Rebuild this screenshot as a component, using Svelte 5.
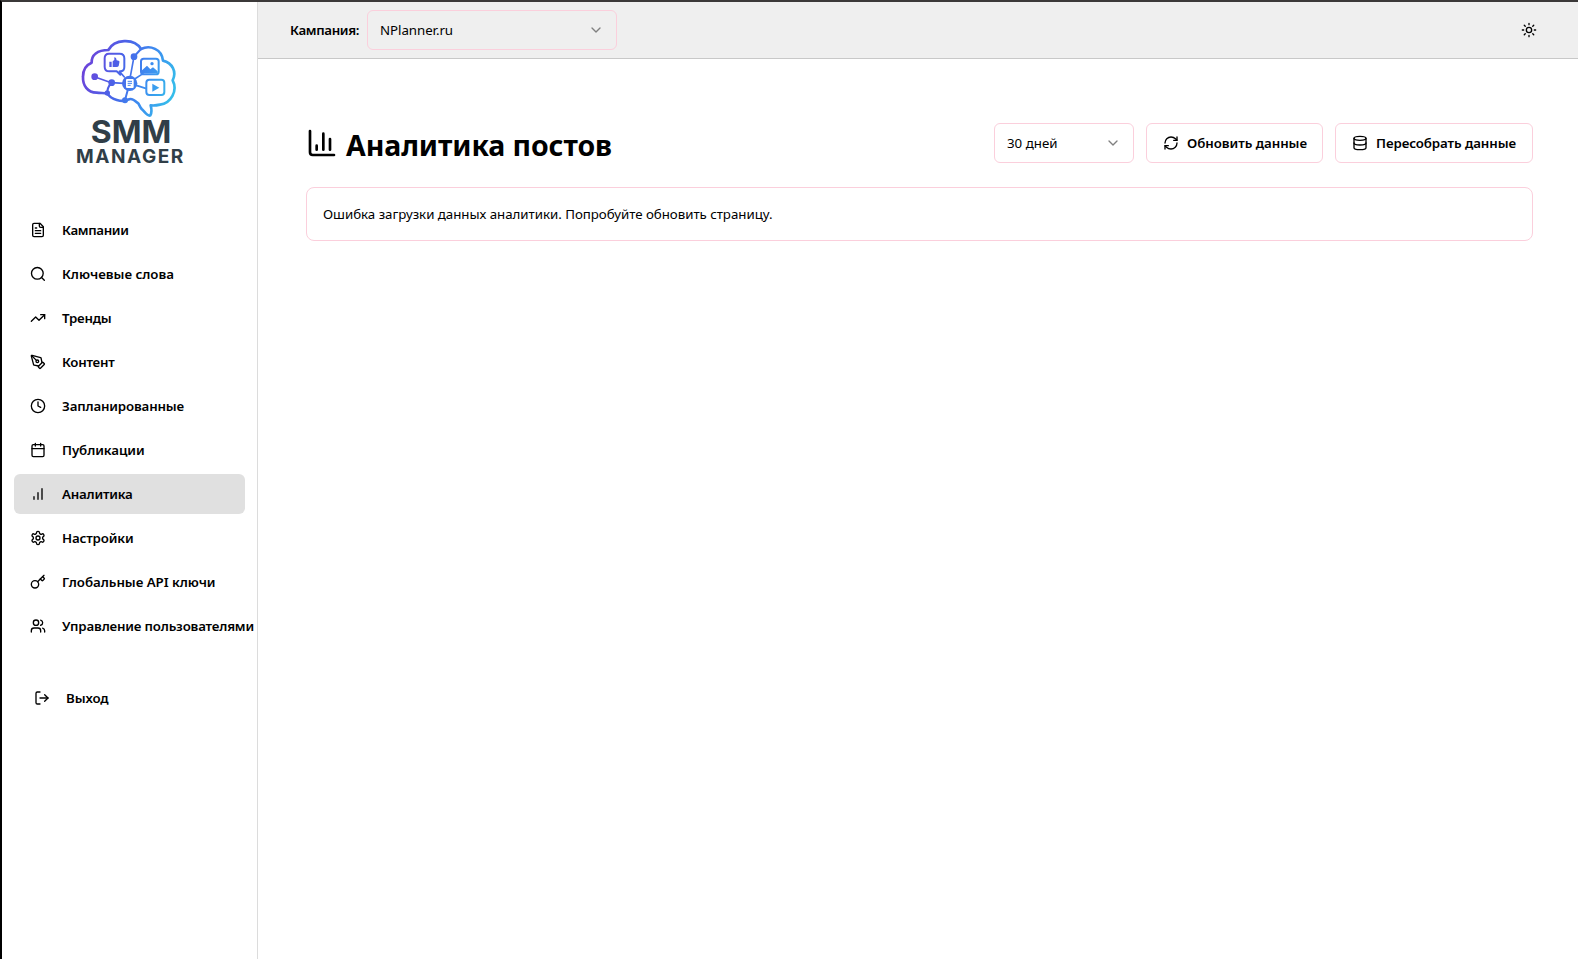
<script>
  const nav = [
    { id: 'file', label: 'Кампании', width: 66.5 },
    { id: 'search', label: 'Ключевые слова', width: 112 },
    { id: 'trend', label: 'Тренды', width: 49.5 },
    { id: 'pen', label: 'Контент', width: 52.5 },
    { id: 'clock', label: 'Запланированные', width: 122 },
    { id: 'calendar', label: 'Публикации', width: 82.5 },
    { id: 'bars', label: 'Аналитика', width: 70.5, active: true },
    { id: 'settings', label: 'Настройки', width: 71.5 },
    { id: 'key', label: 'Глобальные API ключи', width: 153.5 },
    { id: 'users', label: 'Управление пользователями', width: 192 }
  ];

  const icons = {
    file: '<path d="M15 2H6a2 2 0 0 0-2 2v16a2 2 0 0 0 2 2h12a2 2 0 0 0 2-2V7Z"/><path d="M14 2v4a2 2 0 0 0 2 2h4"/><path d="M10 9H8"/><path d="M16 13H8"/><path d="M16 17H8"/>',
    search: '<circle cx="11" cy="11" r="8.8"/><path d="m21.5 21.5-4.2-4.2"/>',
    trend: '<path d="M22 7 13.5 15.5 8.500 10.500 2 17"/><path d="M16 7h6v6"/>',
    pen: '<path d="M15.707 21.293a1 1 0 0 1-1.414 0l-1.586-1.586a1 1 0 0 1 0-1.414l5.586-5.586a1 1 0 0 1 1.414 0l1.586 1.586a1 1 0 0 1 0 1.414z"/><path d="m18 13-1.375-6.874a1 1 0 0 0-.746-.776L3.235 2.028a1 1 0 0 0-1.207 1.207L5.350 15.879a1 1 0 0 0 .776.746L13 18"/><path d="m2.300 2.300 7.286 7.286"/><circle cx="11" cy="11" r="2"/>',
    clock: '<circle cx="12" cy="12" r="10"/><path d="M12 6v6l4 2"/>',
    calendar: '<path d="M8 2v4M16 2v4"/><rect width="18" height="18" x="3" y="4" rx="2"/><path d="M3 10h18"/>',
    bars: '<path d="M12 20V10M18 20V4M6 20v-4"/>',
    settings: '<path d="M12.220 2h-.44a2 2 0 0 0-2 2v.18a2 2 0 0 1-1 1.730l-.43.25a2 2 0 0 1-2 0l-.15-.08a2 2 0 0 0-2.730.73l-.22.38a2 2 0 0 0 .73 2.730l.15.1a2 2 0 0 1 1 1.720v.51a2 2 0 0 1-1 1.740l-.15.09a2 2 0 0 0-.73 2.730l.22.38a2 2 0 0 0 2.730.73l.15-.08a2 2 0 0 1 2 0l.43.25a2 2 0 0 1 1 1.730V20a2 2 0 0 0 2 2h.44a2 2 0 0 0 2-2v-.18a2 2 0 0 1 1-1.730l.43-.25a2 2 0 0 1 2 0l.15.08a2 2 0 0 0 2.730-.73l.22-.39a2 2 0 0 0-.73-2.730l-.15-.08a2 2 0 0 1-1-1.740v-.5a2 2 0 0 1 1-1.740l.15-.09a2 2 0 0 0 .73-2.730l-.22-.38a2 2 0 0 0-2.730-.73l-.15.08a2 2 0 0 1-2 0l-.43-.25a2 2 0 0 1-1-1.730V4a2 2 0 0 0-2-2z"/><circle cx="12" cy="12" r="3"/>',
    key: '<path d="m15.500 7.500 2.300 2.300a1 1 0 0 0 1.400 0l2.100-2.100a1 1 0 0 0 0-1.400L19 4"/><path d="m21 2-9.600 9.600"/><circle cx="7.500" cy="15.500" r="5.500"/>',
    users: '<path d="M16 21v-2a4 4 0 0 0-4-4H6a4 4 0 0 0-4 4v2"/><circle cx="9" cy="7" r="4"/><path d="M22 21v-2a4 4 0 0 0-3-3.870"/><path d="M16 3.130a4 4 0 0 1 0 7.750"/>',
    logout: '<path d="M9 21H5a2 2 0 0 1-2-2V5a2 2 0 0 1 2-2h4"/><path d="m16 17 5-5-5-5"/><path d="M21 12H9"/>',
    chevron: '<path d="m6 9 6 6 6-6"/>',
    sun: '<circle cx="12" cy="12" r="4"/><path d="M12 2v2M12 20v2M4.930 4.930l1.410 1.410M17.660 17.660l1.410 1.410M2 12h2M20 12h2M6.340 17.660l-1.410 1.410M19.070 4.930l-1.410 1.410"/>',
    chart: '<path d="M3 3v16a2 2 0 0 0 2 2h16"/><path d="M18 17V9M13 17V5M8 17v-3"/>',
    refresh: '<path d="M3 12a9 9 0 0 1 9-9 9.750 9.750 0 0 1 6.740 2.740L21 8"/><path d="M21 3v5h-5"/><path d="M21 12a9 9 0 0 1-9 9 9.750 9.750 0 0 1-6.740-2.740L3 16"/><path d="M8 16H3v5"/>',
    database: '<ellipse cx="12" cy="5" rx="9" ry="3"/><path d="M3 5v14a9 3 0 0 0 18 0V5"/><path d="M3 12a9 3 0 0 0 18 0"/>'
  };

  // Adjusts tracking so that a label takes its designed width.
  function fit(node, target) {
    const apply = () => {
      node.style.letterSpacing = '0px';
      const natural = node.getBoundingClientRect().width;
      node.style.letterSpacing = `${(target - natural) / node.textContent.length}px`;
    };
    apply();
    document.fonts.ready.then(apply);
  }
</script>

{#snippet icon(name, size = 16)}
  <svg class="icon" width={size} height={size} viewBox="0 0 24 24" fill="none" stroke="currentColor" stroke-width="2" stroke-linecap="round" stroke-linejoin="round" aria-hidden="true">{@html icons[name]}</svg>
{/snippet}

<div class="app">
  <aside>
    <svg class="logo" width="140" height="145" viewBox="0 0 420 435" fill="none">
      <defs>
        <linearGradient id="brand" gradientUnits="userSpaceOnUse" x1="66" y1="80" x2="346" y2="170">
          <stop offset="0" stop-color="#7140d8" />
          <stop offset=".4" stop-color="#4a63e8" />
          <stop offset=".7" stop-color="#3c8df0" />
          <stop offset="1" stop-color="#35bdea" />
        </linearGradient>
      </defs>
      <g stroke="url(#brand)" stroke-width="8" stroke-linecap="round" stroke-linejoin="round">
        <path d="M110 188C82 188 68 166 69 140C69 120 78 105 95 98C94 75 112 60 145 60C162 28 222 22 243 57C270 44 306 57 309 92C337 99 351 125 338 151C354 182 333 220 300 224C291 226 281 227 272 226C275 237 275 249 271 256C263 261 255 246 245 237C237 228 239 222 232 218C224 211 213 203 205 209C186 218 153 209 142 190C131 189 120 189 110 188Z" />
        <path d="M142 190Q141 173 154 159M195 210L205 174M222 80Q231 70 243 57" stroke-width="6" />
        <path d="M103 140L154 158L192 160M178 124L193 141M222 80L211 140M224 147L249 131M229 166L257 175" stroke-width="5" />
        <path d="M147 71H179Q193 71 193 85V111Q193 124 181 124V134L170 124H148Q134 124 134 110V85Q134 71 147 71Z" stroke-width="6" />
        <rect x="243" y="86" width="53" height="47" rx="8" stroke-width="6" />
        <rect x="259" y="149" width="54" height="46" rx="9" stroke-width="6" />
      </g>
      <g fill="url(#brand)">
        <circle cx="104" cy="140" r="10" /><circle cx="155" cy="158" r="10" /><circle cx="222" cy="80" r="10" /><circle cx="195" cy="211" r="9" /><circle cx="142" cy="189" r="8" /><circle cx="209" cy="160" r="23" />
        <path d="M148 95H155V111H148ZM158 94L163 90V82Q169 81 170 91L176 92Q180 94 178 98L176 108Q175 111 169 111H158Z" />
        <path d="M246 121L261 107L271 118L279 112L293 124V130H246Z" /><circle cx="276" cy="101" r="5" />
        <path d="M277 161L298 173L277 185Z" />
      </g>
      <rect x="198" y="147" width="23" height="27" rx="3" fill="#fff" />
      <path d="M203 154H216M203 160H216M203 166H212" stroke="#3f7ded" stroke-width="3" />
      <g fill="#303e48" font-family="Inter, sans-serif" font-weight="700">
        <text x="92" y="338" font-size="93" textLength="242" lengthAdjust="spacingAndGlyphs">SMM</text>
        <text x="48" y="398" font-size="57" textLength="322" lengthAdjust="spacing">MANAGER</text>
      </g>
    </svg>
    <nav>
      {#each nav as item}
        <div class="item" class:active={item.active}>
          {@render icon(item.id)}
          <span use:fit={item.width}>{item.label}</span>
        </div>
      {/each}
    </nav>
    <div class="item logout">
      {@render icon('logout')}
      <span use:fit={42.5}>Выход</span>
    </div>
  </aside>

  <div class="content">
    <header>
      <span class="label"><span use:fit={69}>Кампания:</span></span>
      <div class="select campaign"><span use:fit={73}>NPlanner.ru</span><i>{@render icon('chevron')}</i></div>
      <div class="theme">{@render icon('sun')}</div>
    </header>
    <main>
      <div class="heading">
        <h1>{@render icon('chart', 32)}<span use:fit={266}>Аналитика постов</span></h1>
        <div class="actions">
          <div class="select period"><span use:fit={50.5}>30 дней</span><i>{@render icon('chevron')}</i></div>
          <button class="update">{@render icon('refresh')}<span use:fit={120}>Обновить данные</span></button>
          <button class="rebuild">{@render icon('database')}<span use:fit={140}>Пересобрать данные</span></button>
        </div>
      </div>
      <div class="alert"><span use:fit={449.5}>Ошибка загрузки данных аналитики. Попробуйте обновить страницу.</span></div>
    </main>
  </div>
</div>

<style>
  :global(body) { margin: 0; overflow: hidden; }
  * { box-sizing: border-box; }
  .app {
    display: flex;
    width: 1578px;
    height: 959px;
    border-top: 2px solid #3b3939;
    border-left: 2px solid #000;
    background: #fff;
    color: #000;
    font: 400 13.3px/20px "Noto Sans", "Open Sans", sans-serif;
    white-space: nowrap;
  }
  .icon { display: block; flex: none; }
  aside { width: 256px; flex: none; border-right: 1px solid #dcdcdc; padding: 28px 12px 0; }
  .logo { display: block; margin-left: 46px; }
  nav { display: flex; flex-direction: column; gap: 4px; margin-top: 35px; }
  .item {
    display: flex;
    align-items: center;
    gap: 16px;
    height: 40px;
    padding-left: 16px;
    border-radius: 6px;
    font-weight: 600;
  }
  .item.active { background: #e0e0e0; }
  .logout { margin: 32px 0 0 4px; }
  .content { flex: 1; min-width: 0; }
  header {
    display: flex;
    align-items: center;
    height: 57px;
    padding: 0 41px 0 32px;
    border-bottom: 1px solid #c8c8c8;
    background: #efefef;
  }
  .label { width: 77px; font-weight: 600; }
  .select {
    display: flex;
    align-items: center;
    justify-content: space-between;
    height: 40px;
    padding: 0 12px;
    border: 1px solid #fbcfdc;
    border-radius: 6px;
  }
  .select i { color: #808080; }
  .campaign { width: 250px; }
  .theme { margin-left: auto; }
  main { padding: 64px 45px 0 48px; }
  .heading { display: flex; align-items: center; justify-content: space-between; height: 40px; }
  h1 { display: flex; align-items: center; gap: 8px; margin: 0; font-size: 28.5px; line-height: 36px; font-weight: 700; }
  h1 span { padding-top: 3px; }
  .actions { display: flex; gap: 12px; }
  .period { width: 140px; }
  button {
    display: flex;
    align-items: center;
    gap: 8px;
    height: 40px;
    padding: 0 16px;
    border: 1px solid #fbcfdc;
    border-radius: 6px;
    background: #fff;
    color: inherit;
    font: inherit;
    font-weight: 600;
  }
  .update { width: 177px; }
  .rebuild { width: 198px; }
  .alert { display: flex; align-items: center; height: 54px; margin-top: 24px; padding-left: 16px; border: 1px solid #fbcfdc; border-radius: 8px; }
</style>
